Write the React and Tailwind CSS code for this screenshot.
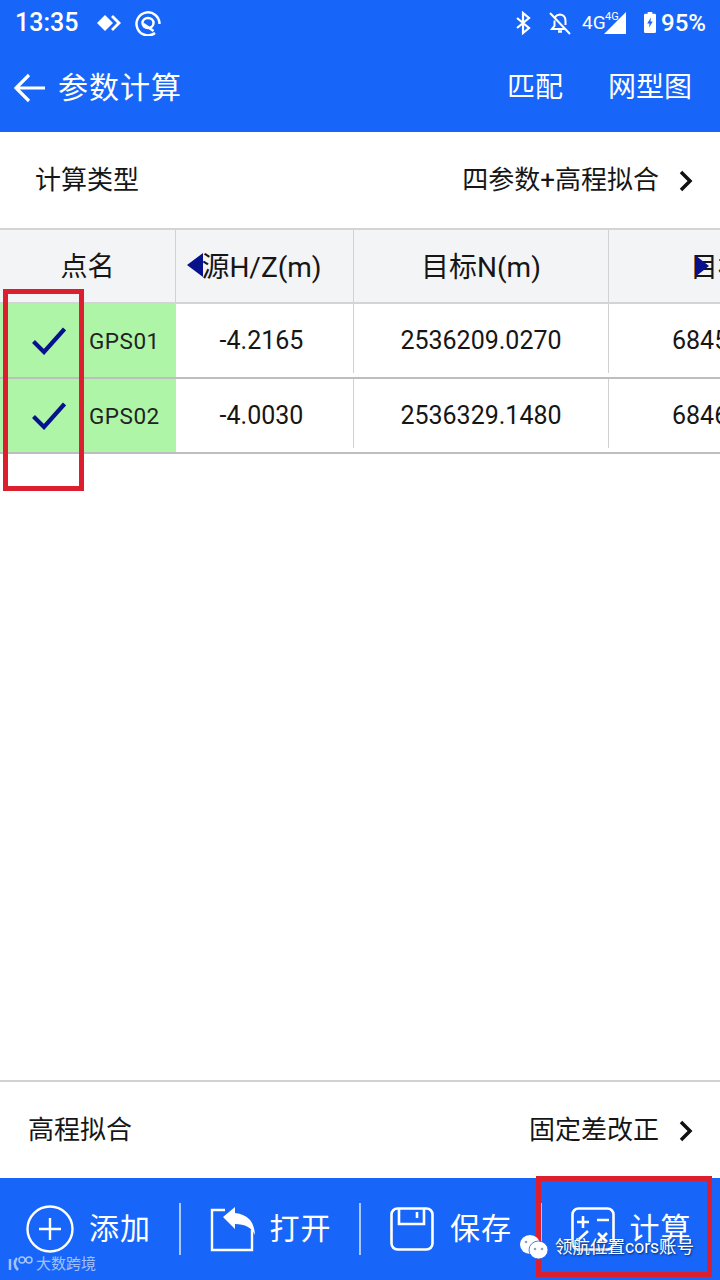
import React from 'react';

const COLS = 'grid grid-cols-[176px_178px_255px_200px] w-[809px]';

function Chevron() {
    return (
        <svg width="16" height="22" viewBox="0 0 16 22" fill="none" stroke="#111" strokeWidth="3.500" className="ml-[19px]">
            <path d="M3 2l9 9-9 9" />
        </svg>
    );
}

function Check() {
    return (
        <svg width="34" height="28" viewBox="0 0 34 28" fill="none" stroke="#06128c" strokeWidth="4.2">
            <path d="M1.500 14.500L12 25 32.500 2" />
        </svg>
    );
}

function StatusIcons() {
    return (
        <div className="flex items-center">
            <svg width="16" height="24" viewBox="0 0 16 24" fill="none" stroke="white" strokeWidth="2.2" className="mr-[18px]">
                <path d="M2 7l12 10-6 5V2l6 5L2 17" />
            </svg>
            <svg width="22" height="24" viewBox="0 0 22 24" fill="none" stroke="white" strokeWidth="2" className="mr-[11px]">
                <path d="M1 2l20 21M6 6.500Q7 4 11 3.500Q16.500 4 16.500 10V14M5.500 9.500V15L3 18H16" />
                <path d="M9 20.500h4" strokeWidth="2.500" />
            </svg>
            <div className="relative w-[45px] h-[24px] mr-[17px]">
                <span className="absolute left-0 top-[1px] text-[19px] leading-[22px] text-white">4G</span>
                <span className="absolute left-[23px] top-[-1px] text-[11px] leading-[14px] text-white">4G</span>
                <svg width="23" height="23" viewBox="0 0 23 23" className="absolute right-0 top-[1px]">
                    <path d="M22 0v22H0z" fill="white" />
                </svg>
            </div>
            <svg width="12" height="23" viewBox="0 0 13 23" className="mr-[5px]">
                <path d="M4 0h5v2h2.500q1.500 0 1.500 1.500V21.500q0 1.500-1.500 1.500H1.500Q0 23 0 21.500V3.500Q0 2 1.500 2H4z" fill="white" />
                <path d="M7.500 6L3.500 12.500H6L5.500 17 9.500 10.500H7z" fill="#1766f9" />
            </svg>
            <span className="text-[24px] leading-[30px] font-medium text-white">95%</span>
        </div>
    );
}

function BottomItem({ icon, label, last }) {
    return (
        <div className={`flex items-center h-[52px] ${last ? 'w-[179px]' : 'w-[181px] border-r-2 border-[#a9c8fb]'}`}>
            {icon}
            <span className="text-[30px] leading-[40px] text-white tracking-[1px]">{label}</span>
        </div>
    );
}

export default function App() {
    return (
        <div className="relative w-[720px] h-[1280px] overflow-hidden bg-white flex flex-col text-[#161616]" style={{ fontFamily: 'Roboto, "Noto Sans CJK SC", sans-serif' }}>
            {/* header */}
            <div className="h-[132px] shrink-0 bg-[#1766f9]">
                <div className="h-[44px] flex items-center justify-between pl-[15px] pr-[14px] pt-[1px]">
                    <div className="flex items-center">
                        <span className="text-[25px] leading-[30px] font-medium text-white">13:35</span>
                        <svg width="26" height="18" viewBox="0 0 26 18" fill="white" className="ml-[18px]">
                            <path d="M9 1l8 8-8 8-8-8z" />
                            <path d="M17 1l8 8-8 8-2-2 6-6-6-6z" />
                        </svg>
                        <svg width="26" height="26" viewBox="0 0 26 26" fill="none" stroke="white" strokeWidth="2.500" className="ml-[13px]">
                            <path d="M20 23A11.500 11.500 0 1 1 24.500 14" />
                            <ellipse cx="13" cy="13" rx="5.500" ry="5" />
                            <path d="M8.500 14l10 7" />
                        </svg>
                    </div>
                    <StatusIcons />
                </div>
                <div className="h-[88px] flex items-center justify-between pl-[14px] pr-[28px]">
                    <div className="flex items-center">
                        <svg width="32" height="30" viewBox="0 0 32 30" fill="none" stroke="white" strokeWidth="3.200">
                            <path d="M31 15H3M15 2L2 15l13 13" />
                        </svg>
                        <span className="ml-[12px] text-[30px] leading-[40px] text-white tracking-[1px]">参数计算</span>
                    </div>
                    <div className="flex items-center gap-[45px] text-[28px] leading-[40px] text-white">
                        <span>匹配</span>
                        <span>网型图</span>
                    </div>
                </div>
            </div>

            {/* calc type */}
            <div className="h-[96px] shrink-0 flex items-center justify-between pl-[35px] pr-[26px] pt-[1px] text-[26px]">
                <span>计算类型</span>
                <div className="flex items-center">
                    <span>四参数+高程拟合</span>
                    <Chevron />
                </div>
            </div>

            {/* table */}
            <div className="shrink-0 overflow-hidden">
                <div className={`${COLS} h-[76px] bg-[#f2f4f5] border-y-2 border-[#d2d4d6] text-[28px]`}>
                    <div className="flex items-center justify-center border-r border-[#cfd1d3] pt-[3px] text-[27px]">点名</div>
                    <div className="relative flex items-center justify-center border-r border-[#cfd1d3] pt-[3px] pr-[6px]">
                        源H/Z(m)
                        <span className="absolute left-[11px] top-[23px] w-0 h-0 border-y-[12px] border-y-transparent border-r-[16px] border-r-[#06128c]" />
                    </div>
                    <div className="flex items-center justify-center border-r border-[#cfd1d3] pt-[3px]">目标N(m)</div>
                    <div className="relative flex items-center pl-[81px] pt-[3px] whitespace-nowrap">
                        目标E(m)
                        <span className="absolute left-[86px] top-[25px] w-0 h-0 border-y-[11px] border-y-transparent border-l-[14px] border-l-[#06128c]" />
                    </div>
                </div>
                {[
                    ['GPS01', '-4.2165', '2536209.0270', '684512.3310'],
                    ['GPS02', '-4.0030', '2536329.1480', '684623.5120'],
                ].map((row) => (
                    <div key={row[0]} className={`${COLS} h-[75px] border-b-2 border-[#bcbec0] text-[25px]`}>
                        <div className="flex items-center bg-[#aef5a8] pl-[32px]">
                            <Check />
                            <span className="ml-[23px] mt-[3px] text-[22.500px] tracking-[0.5px] text-[#222]">{row[0]}</span>
                        </div>
                        <div className="flex items-center justify-center mb-[4px] pt-[5px] pr-[6px] border-r border-[#cfd1d3]">{row[1]}</div>
                        <div className="flex items-center justify-center mb-[4px] pt-[5px] border-r border-[#cfd1d3]">{row[2]}</div>
                        <div className="flex items-center pl-[63px]">{row[3]}</div>
                    </div>
                ))}
            </div>

            <div className="flex-1" />

            {/* height fitting */}
            <div className="h-[98px] shrink-0 border-t-2 border-[#d0d2d4] flex items-center justify-between pl-[28px] pr-[26px] pt-[1px] text-[26px]">
                <span>高程拟合</span>
                <div className="flex items-center">
                    <span>固定差改正</span>
                    <Chevron />
                </div>
            </div>

            {/* bottom bar */}
            <div className="h-[102px] shrink-0 bg-[#1766f9] flex items-center">
                <BottomItem
                    label="添加"
                    icon={
                        <svg width="48" height="48" viewBox="0 0 48 48" fill="none" stroke="white" strokeWidth="2.400" className="ml-[26px] mr-[15px]">
                            <circle cx="24" cy="24" r="22.500" />
                            <path d="M24 13v22M13 24h22" />
                        </svg>
                    }
                />
                <BottomItem
                    label="打开"
                    icon={
                        <svg width="46" height="46" viewBox="0 0 46 46" fill="none" className="ml-[29px] mr-[14px]">
                            <path d="M15 4H2v40h40V24" stroke="white" strokeWidth="2.400" />
                            <path d="M13 11L25 1v6q19 2 20 22-5-11-20-11v5z" fill="white" />
                        </svg>
                    }
                />
                <BottomItem
                    label="保存"
                    icon={
                        <svg width="44" height="44" viewBox="0 0 44 44" fill="none" stroke="white" strokeWidth="2.600" className="ml-[29px] mr-[16px]">
                            <rect x="1.500" y="1.500" width="41" height="41" rx="6" />
                            <path d="M9 2v15h25V2M27 5v6" />
                        </svg>
                    }
                />
                <BottomItem
                    last
                    label="计算"
                    icon={
                        <svg width="44" height="44" viewBox="0 0 44 44" fill="none" stroke="white" strokeWidth="2.600" className="ml-[29px] mr-[15px]">
                            <rect x="1.500" y="1.500" width="41" height="41" rx="6" />
                            <path d="M6 15h12M12 9v12M26 13h12M6 34L17 24M27 26l9 9M36 26l-9 9" />
                        </svg>
                    }
                />
            </div>

            {/* annotation boxes */}
            <div className="absolute left-[3px] top-[289px] w-[81px] h-[202px] border-[5px] border-[#dc1f2e]" />
            <div className="absolute left-[536px] top-[1176px] w-[176px] h-[101px] border-[5px] border-[#dc1f2e]" />

            {/* watermarks */}
            <div className="absolute left-[8px] top-[1255px] flex items-center text-white/60">
                <svg width="26" height="18" viewBox="0 0 26 18" fill="none" stroke="currentColor" strokeWidth="1.500">
                    <path d="M2 4v11M9 3Q4 9 10 15" strokeWidth="2.500" />
                    <circle cx="14" cy="5" r="3" />
                    <circle cx="21" cy="5" r="3" />
                </svg>
                <span className="ml-[2px] text-[15px] leading-[18px]">大数跨境</span>
            </div>
            <div className="absolute left-[520px] top-[1235px] flex items-center">
                <svg width="28" height="24" viewBox="0 0 28 24" fill="white">
                    <ellipse cx="10" cy="9.500" rx="10" ry="9.500" />
                    <ellipse cx="18.500" cy="15" rx="9.500" ry="9" stroke="#1766f9" strokeWidth="0.800" />
                    <circle cx="15" cy="14" r="1.300" fill="#8fa3b8" />
                    <circle cx="22" cy="14" r="1.300" fill="#8fa3b8" />
                    <circle cx="6" cy="7" r="1.300" fill="#8fa3b8" />
                </svg>
                <span className="ml-[7px] text-[17.500px] leading-[24px] text-white [text-shadow:1px_1px_2px_rgba(0,0,0,0.6)]">领航位置cors账号</span>
            </div>
        </div>
    );
}
